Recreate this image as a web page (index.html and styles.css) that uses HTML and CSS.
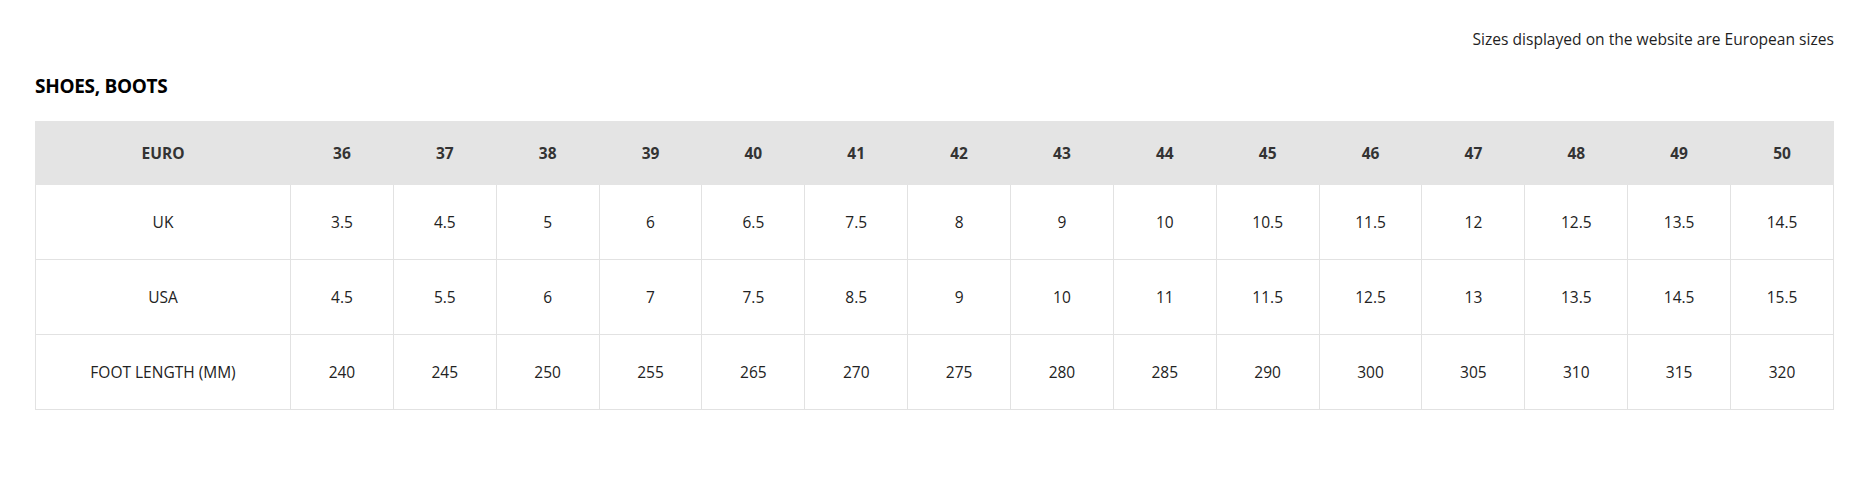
FILE: index.html
```html
<!DOCTYPE html>
<html lang="en">
<head>
<meta charset="utf-8">
<title>Size guide</title>
<link rel="stylesheet" href="styles.css">
</head>
<body>
<div class="page">
  <p class="note">Sizes displayed on the website are European sizes</p>
  <h2 class="title">SHOES, BOOTS</h2>
  <table class="sizes">
    <colgroup>
      <col class="label-col">
      <col span="15">
    </colgroup>
    <thead>
      <tr>
        <th>EURO</th>
        <th>36</th><th>37</th><th>38</th><th>39</th><th>40</th><th>41</th><th>42</th><th>43</th><th>44</th><th>45</th><th>46</th><th>47</th><th>48</th><th>49</th><th>50</th>
      </tr>
    </thead>
    <tbody>
      <tr>
        <td>UK</td>
        <td>3.5</td><td>4.5</td><td>5</td><td>6</td><td>6.5</td><td>7.5</td><td>8</td><td>9</td><td>10</td><td>10.5</td><td>11.5</td><td>12</td><td>12.5</td><td>13.5</td><td>14.5</td>
      </tr>
      <tr>
        <td>USA</td>
        <td>4.5</td><td>5.5</td><td>6</td><td>7</td><td>7.5</td><td>8.5</td><td>9</td><td>10</td><td>11</td><td>11.5</td><td>12.5</td><td>13</td><td>13.5</td><td>14.5</td><td>15.5</td>
      </tr>
      <tr>
        <td>FOOT LENGTH (MM)</td>
        <td>240</td><td>245</td><td>250</td><td>255</td><td>265</td><td>270</td><td>275</td><td>280</td><td>285</td><td>290</td><td>300</td><td>305</td><td>310</td><td>315</td><td>320</td>
      </tr>
    </tbody>
  </table>
</div>
</body>
</html>
```

FILE: styles.css
```css
html, body {
  margin: 0;
  padding: 0;
  background: #ffffff;
}

body {
  font-family: "Open Sans", "Noto Sans", sans-serif;
  color: #222222;
}

.page {
  padding: 28px 38px 0 35px;
}

.note {
  margin: 0;
  text-align: right;
  font-size: 15.6px;
  line-height: 22px;
  color: #1f1f1f;
}

.title {
  margin: 24px 0 0 0;
  font-size: 19px;
  line-height: 24px;
  font-weight: 700;
  color: #000000;
  letter-spacing: -0.3px;
}

.sizes {
  margin-top: 23px;
  width: 100%;
  border-collapse: collapse;
  table-layout: fixed;
}

.label-col {
  width: 255px;
}

.sizes th,
.sizes td {
  text-align: center;
  border: 1px solid #e2e2e2;
  padding: 0;
}

.sizes th {
  background: #e4e4e4;
  height: 62px;
  font-size: 15.5px;
  font-weight: 700;
  color: #333333;
  border-color: #e4e4e4;
}

.sizes td {
  height: 74px;
  font-size: 15.5px;
  color: #222222;
}
```
